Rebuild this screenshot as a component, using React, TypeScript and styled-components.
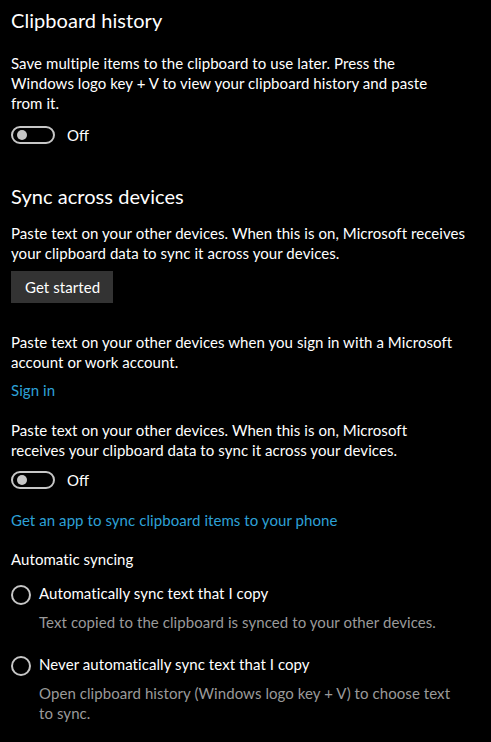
import React from "react";
import styled, { createGlobalStyle } from "styled-components";

const GlobalStyle = createGlobalStyle`
  html, body {
    margin: 0;
    background: #000;
  }
  body {
    font-family: Lato, "Noto Sans", sans-serif;
    color: #fff;
  }
`;

const Page = styled.main`
  display: flex;
  flex-direction: column;
  align-items: flex-start;
  padding: 6px 11px 20px;
  width: 491px;
  box-sizing: border-box;
  background: #000;
  min-height: 742px;
`;

const Title = styled.h2<{ $mt?: number }>`
  margin: ${p => p.$mt ?? 0}px 0 0;
  font-size: 20px;
  line-height: 28px;
  font-weight: 400;
  color: #fff;
  letter-spacing: 0.05px;
`;

const Text = styled.p<{ $mt: number; $muted?: boolean; $indent?: boolean; $lh?: number }>`
  margin: ${p => p.$mt}px 0 0 ${p => (p.$indent ? 28 : 0)}px;
  font-size: 15px;
  line-height: ${p => p.$lh ?? 20}px;
  color: ${p => (p.$muted ? "#9a9a9a" : "#fff")};
  white-space: nowrap;
  letter-spacing: 0.07px;
`;

const Link = styled.a<{ $mt: number }>`
  display: block;
  margin-top: ${p => p.$mt}px;
  font-size: 15px;
  line-height: 20px;
  color: #2da0d7;
  text-decoration: none;
  letter-spacing: 0.07px;
  cursor: pointer;
`;

const Button = styled.button<{ $mt: number }>`
  margin-top: ${p => p.$mt}px;
  height: 32px;
  width: 102px;
  padding: 0 0 0 14px;
  border: none;
  background: #333;
  color: #fff;
  font-family: Lato, "Noto Sans", sans-serif;
  font-size: 15px;
  line-height: 20px;
  text-align: left;
  letter-spacing: 0.07px;
`;

const ToggleRow = styled.div<{ $mt: number }>`
  display: flex;
  align-items: center;
  gap: 12px;
  margin-top: ${p => p.$mt}px;
  height: 18px;
`;

const ToggleTrack = styled.span`
  display: flex;
  align-items: center;
  box-sizing: border-box;
  width: 44px;
  height: 18px;
  border: 2px solid #c6c6c6;
  border-radius: 9px;
  padding-left: 4px;
`;

const ToggleThumb = styled.span`
  width: 10px;
  height: 10px;
  border-radius: 50%;
  background: #c6c6c6;
`;

const ToggleLabel = styled.span`
  font-size: 15px;
  line-height: 20px;
  color: #fff;
`;

const RadioRow = styled.label<{ $mt: number }>`
  display: flex;
  align-items: flex-start;
  gap: 8px;
  margin-top: ${p => p.$mt}px;
  font-size: 15px;
  line-height: 20px;
  color: #fff;
  letter-spacing: 0.07px;
`;

const RadioCircle = styled.span`
  box-sizing: border-box;
  width: 20px;
  height: 20px;
  margin-top: 2px;
  border: 2px solid #c6c6c6;
  border-radius: 50%;
  flex: none;
`;

function Toggle({ mt }: { mt: number }) {
  return (
    <ToggleRow $mt={mt}>
      <ToggleTrack>
        <ToggleThumb />
      </ToggleTrack>
      <ToggleLabel>Off</ToggleLabel>
    </ToggleRow>
  );
}

export default function App() {
  return (
    <Page>
      <GlobalStyle />
      <Title>Clipboard history</Title>
      <Text $mt={19}>
        Save multiple items to the clipboard to use later. Press the
        <br />
        Windows logo key + V to view your clipboard history and paste
        <br />
        from it.
      </Text>
      <Toggle mt={13} />

      <Title $mt={38}>Sync across devices</Title>
      <Text $mt={13}>
        Paste text on your other devices. When this is on, Microsoft receives
        <br />
        your clipboard data to sync it across your devices.
      </Text>
      <Button $mt={8}>Get started</Button>

      <Text $mt={29}>
        Paste text on your other devices when you sign in with a Microsoft
        <br />
        account or work account.
      </Text>
      <Link $mt={8}>Sign in</Link>

      <Text $mt={20}>
        Paste text on your other devices. When this is on, Microsoft
        <br />
        receives your clipboard data to sync it across your devices.
      </Text>
      <Toggle mt={11} />

      <Link $mt={21}>Get an app to sync clipboard items to your phone</Link>

      <Text $mt={19}>Automatic syncing</Text>
      <RadioRow $mt={14}>
        <RadioCircle />
        Automatically sync text that I copy
      </RadioRow>
      <Text $mt={7} $muted $indent>
        Text copied to the clipboard is synced to your other devices.
      </Text>
      <RadioRow $mt={22}>
        <RadioCircle />
        Never automatically sync text that I copy
      </RadioRow>
      <Text $mt={7} $muted $indent>
        Open clipboard history (Windows logo key + V) to choose text
        <br />
        to sync.
      </Text>
    </Page>
  );
}
